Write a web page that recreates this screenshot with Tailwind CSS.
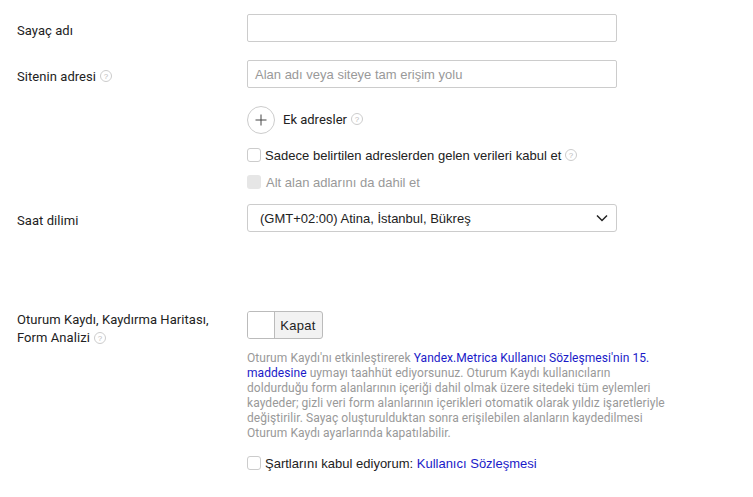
<!DOCTYPE html>
<html lang="tr">
<head>
<meta charset="utf-8">
<script src="https://cdn.jsdelivr.net/npm/@tailwindcss/browser@4"></script>
</head>
<body class="bg-white">
<div class="w-[753px] h-[497px] overflow-hidden pl-[17px] pt-[14px] text-[13px] leading-[15px] text-[#222] font-['Liberation_Sans',sans-serif]">

  <div class="flex h-[28px] items-center">
    <div class="w-[230px] font-['Roboto',sans-serif] text-[13px] tracking-[0.06px] pt-[4px]">Sayaç adı</div>
    <div class="w-[370px] h-[28px] border border-[#ccc] rounded-[2px]"></div>
  </div>

  <div class="flex h-[28px] items-center mt-[18px]">
    <div class="w-[230px] font-['Roboto',sans-serif] text-[13px] tracking-[0.06px] flex items-center gap-[4px] pt-[4px]">Sitenin adresi
      <svg class="w-[12px] h-[12px]" viewBox="0 0 12 12"><circle cx="6" cy="6" r="5.5" fill="none" stroke="#ccc"/><text x="6" y="8.8" text-anchor="middle" font-size="8" fill="#bbb" font-family="Liberation Sans">?</text></svg>
    </div>
    <div class="w-[370px] h-[28px] border border-[#ccc] rounded-[2px] flex items-center px-[7px] text-[#999]">Alan adı veya siteye tam erişim yolu</div>
  </div>

  <div class="flex h-[28px] items-center mt-[18px] ml-[230px]">
    <div class="w-[28px] h-[28px] rounded-full border border-[#ccc] flex items-center justify-center">
      <svg class="w-[12px] h-[12px]" viewBox="0 0 12 12"><path d="M6 0.5v11M0.5 6h11" stroke="#444" stroke-width="1"/></svg>
    </div>
    <div class="ml-[8px] font-['Roboto',sans-serif] text-[13px] flex items-center gap-[4px] pb-[2px]">Ek adresler
      <svg class="w-[12px] h-[12px]" viewBox="0 0 12 12"><circle cx="6" cy="6" r="5.5" fill="none" stroke="#ccc"/><text x="6" y="8.8" text-anchor="middle" font-size="8" fill="#bbb" font-family="Liberation Sans">?</text></svg>
    </div>
  </div>

  <div class="flex items-center h-[14px] mt-[14px] ml-[230px]">
    <div class="w-[14px] h-[14px] border border-[#ccc] rounded-[3px]"></div>
    <div class="ml-[4px] flex items-center gap-[4px] tracking-[0.03px]">Sadece belirtilen adreslerden gelen verileri kabul et
      <svg class="w-[12px] h-[12px]" viewBox="0 0 12 12"><circle cx="6" cy="6" r="5.5" fill="none" stroke="#ccc"/><text x="6" y="8.8" text-anchor="middle" font-size="8" fill="#bbb" font-family="Liberation Sans">?</text></svg>
    </div>
  </div>

  <div class="flex items-center h-[14px] mt-[13px] ml-[230px]">
    <div class="w-[14px] h-[14px] bg-[#e6e6e6] rounded-[3px]"></div>
    <div class="ml-[5px] text-[#999]">Alt alan adlarını da dahil et</div>
  </div>

  <div class="flex h-[28px] items-center mt-[15px]">
    <div class="w-[230px] font-['Roboto',sans-serif] text-[13px] tracking-[0.06px] pt-[4px]">Saat dilimi</div>
    <div class="w-[370px] h-[28px] border border-[#ccc] rounded-[3px] flex items-center justify-between pl-[12px] pr-[8px]">
      <span>(GMT+02:00) Atina, İstanbul, Bükreş</span>
      <svg class="w-[12px] h-[8px]" viewBox="0 0 12 8"><path d="M1 1.5l5 5 5-5" fill="none" stroke="#222" stroke-width="1.5"/></svg>
    </div>
  </div>

  <div class="flex mt-[79px]">
    <div class="w-[230px] font-['Roboto',sans-serif] text-[13px] tracking-[0.06px] leading-[18px]">
      <div>Oturum Kaydı, Kaydırma Haritası,</div>
      <div class="flex items-center gap-[4px]">Form Analizi
        <svg class="w-[12px] h-[12px]" viewBox="0 0 12 12"><circle cx="6" cy="6" r="5.5" fill="none" stroke="#ccc"/><text x="6" y="8.8" text-anchor="middle" font-size="8" fill="#bbb" font-family="Liberation Sans">?</text></svg>
      </div>
    </div>
    <div class="w-[440px]">
      <div class="flex w-[76px] h-[28px] border border-[#bbb] rounded-[3px] bg-[#f2f2f2] overflow-hidden">
        <div class="w-[27px] h-full bg-white border-r border-[#bbb]"></div>
        <div class="flex-1 flex items-center justify-center tracking-[0.3px] pr-[1px]">Kapat</div>
      </div>
      <p class="mt-[12px] w-[440px] text-[12px] leading-[15px] text-[#999] font-['Roboto',sans-serif] tracking-[0.06px]">Oturum Kaydı'nı etkinleştirerek <span class="text-[#1a1ac8]">Yandex.Metrica Kullanıcı Sözleşmesi'nin 15.<br>maddesine</span> uymayı taahhüt ediyorsunuz. Oturum Kaydı kullanıcıların<br>doldurduğu form alanlarının içeriği dahil olmak üzere sitedeki tüm eylemleri<br>kaydeder; gizli veri form alanlarının içerikleri otomatik olarak yıldız işaretleriyle<br>değiştirilir. Sayaç oluşturulduktan sonra erişilebilen alanların kaydedilmesi<br>Oturum Kaydı ayarlarında kapatılabilir.</p>
      <div class="flex items-center h-[14px] mt-[15px]">
        <div class="w-[14px] h-[14px] border border-[#ccc] rounded-[3px]"></div>
        <div class="ml-[4px] pt-[1px]">Şartlarını kabul ediyorum: <span class="text-[#1a1ac8]">Kullanıcı Sözleşmesi</span></div>
      </div>
    </div>
  </div>
</div>
</body>
</html>
